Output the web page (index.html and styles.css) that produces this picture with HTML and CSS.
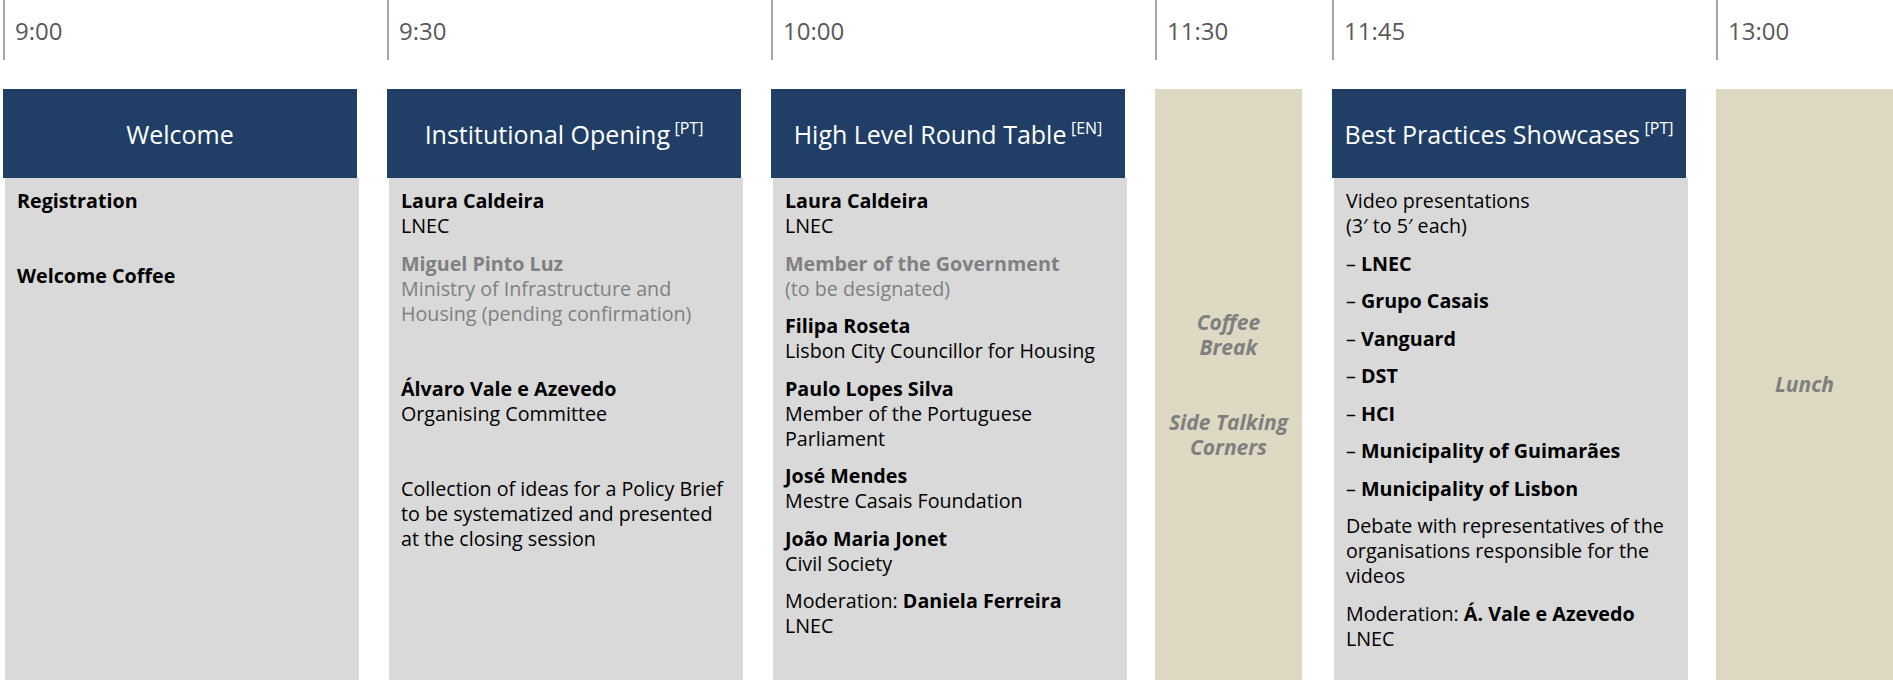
FILE: index.html
```html
<!DOCTYPE html>
<html lang="en">
<head>
<meta charset="utf-8">
<title>Programme</title>
<link rel="stylesheet" href="styles.css">
</head>
<body>
<div class="schedule">
  <div class="col">
    <div class="time">9:00</div>
    <div class="head"><span class="title">Welcome</span></div>
    <div class="body">
      <p class="b">Registration</p>
      <p class="empty"></p>
      <p class="b">Welcome Coffee</p>
    </div>
  </div>
  <div class="col">
    <div class="time">9:30</div>
    <div class="head"><span class="title">Institutional Opening <sup>[PT]</sup></span></div>
    <div class="body">
      <p><span class="b">Laura Caldeira</span><br>LNEC</p>
      <p class="muted"><span class="b">Miguel Pinto Luz</span><br>Ministry of Infrastructure and Housing (pending confirmation)</p>
      <p class="empty"></p>
      <p><span class="b">Álvaro Vale e Azevedo</span><br>Organising Committee</p>
      <p class="empty"></p>
      <p>Collection of ideas for a Policy Brief to be systematized and presented at the closing session</p>
    </div>
  </div>
  <div class="col">
    <div class="time">10:00</div>
    <div class="head"><span class="title">High Level Round Table <sup>[EN]</sup></span></div>
    <div class="body">
      <p><span class="b">Laura Caldeira</span><br>LNEC</p>
      <p class="muted"><span class="b">Member of the Government</span><br>(to be designated)</p>
      <p><span class="b">Filipa Roseta</span><br>Lisbon City Councillor for Housing</p>
      <p><span class="b">Paulo Lopes Silva</span><br>Member of the Portuguese Parliament</p>
      <p><span class="b">José Mendes</span><br>Mestre Casais Foundation</p>
      <p><span class="b">João Maria Jonet</span><br>Civil Society</p>
      <p>Moderation: <span class="b">Daniela Ferreira</span><br>LNEC</p>
    </div>
  </div>
  <div class="col narrow">
    <div class="time">11:30</div>
    <div class="pause">
      <p>Coffee<br>Break</p>
      <p class="empty"></p>
      <p>Side Talking<br>Corners</p>
    </div>
  </div>
  <div class="col">
    <div class="time">11:45</div>
    <div class="head"><span class="title">Best Practices Showcases <sup>[PT]</sup></span></div>
    <div class="body">
      <p>Video presentations<br>(3′ to 5′ each)</p>
      <p>– <span class="b">LNEC</span></p>
      <p>– <span class="b">Grupo Casais</span></p>
      <p>– <span class="b">Vanguard</span></p>
      <p>– <span class="b">DST</span></p>
      <p>– <span class="b">HCI</span></p>
      <p>– <span class="b">Municipality of Guimarães</span></p>
      <p>– <span class="b">Municipality of Lisbon</span></p>
      <p>Debate with representatives of the organisations responsible for the videos</p>
      <p>Moderation: <span class="b">Á. Vale e Azevedo</span><br>LNEC</p>
    </div>
  </div>
  <div class="col last">
    <div class="time">13:00</div>
    <div class="pause">
      <p>Lunch</p>
    </div>
  </div>
</div>
</body>
</html>
```

FILE: styles.css
```css
html, body {
  margin: 0;
  padding: 0;
  background: #ffffff;
}

body {
  font-family: "Open Sans", "Noto Sans", sans-serif;
  color: #000000;
}

.schedule {
  display: flex;
  gap: 30px;
  padding-left: 3px;
  height: 680px;
  overflow: hidden;
}

.col {
  flex: none;
  width: 354px;
  display: flex;
  flex-direction: column;
}

.col.narrow {
  width: 147px;
}

.col.last {
  width: 177px;
}

.time {
  flex: none;
  height: 60px;
  box-sizing: border-box;
  border-left: 2px solid #a6a6a6;
  padding-left: 10px;
  display: flex;
  align-items: center;
  font-size: 24px;
  color: #595959;
}

.head {
  flex: none;
  margin-top: 29px;
  height: 89px;
  background: #213f66;
  color: #ffffff;
  display: flex;
  align-items: center;
  justify-content: center;
  font-size: 25px;
  white-space: nowrap;
}

.title {
  line-height: 30px;
}

.head sup {
  font-size: 16px;
  line-height: 0;
  vertical-align: 10px;
  margin-left: -2px;
}

.body {
  flex: 1;
  margin-left: 2px;
  margin-right: -2px;
  padding: 10px 12px;
  background: #d9d9d9;
  font-size: 19.7px;
  line-height: 25px;
}

.body p,
.pause p {
  margin: 0 0 12.5px;
}

.empty {
  height: 25px;
}

.b {
  font-weight: 700;
}

.muted {
  color: #808080;
}

.pause {
  flex: 1;
  margin-top: 29px;
  background: #ddd9c3;
  display: flex;
  flex-direction: column;
  justify-content: center;
  align-items: center;
  text-align: center;
  color: #7f7f7f;
  font-weight: 700;
  font-style: italic;
  font-size: 21px;
  line-height: 25px;
}

.pause p:last-child {
  margin-bottom: 0;
}
```
